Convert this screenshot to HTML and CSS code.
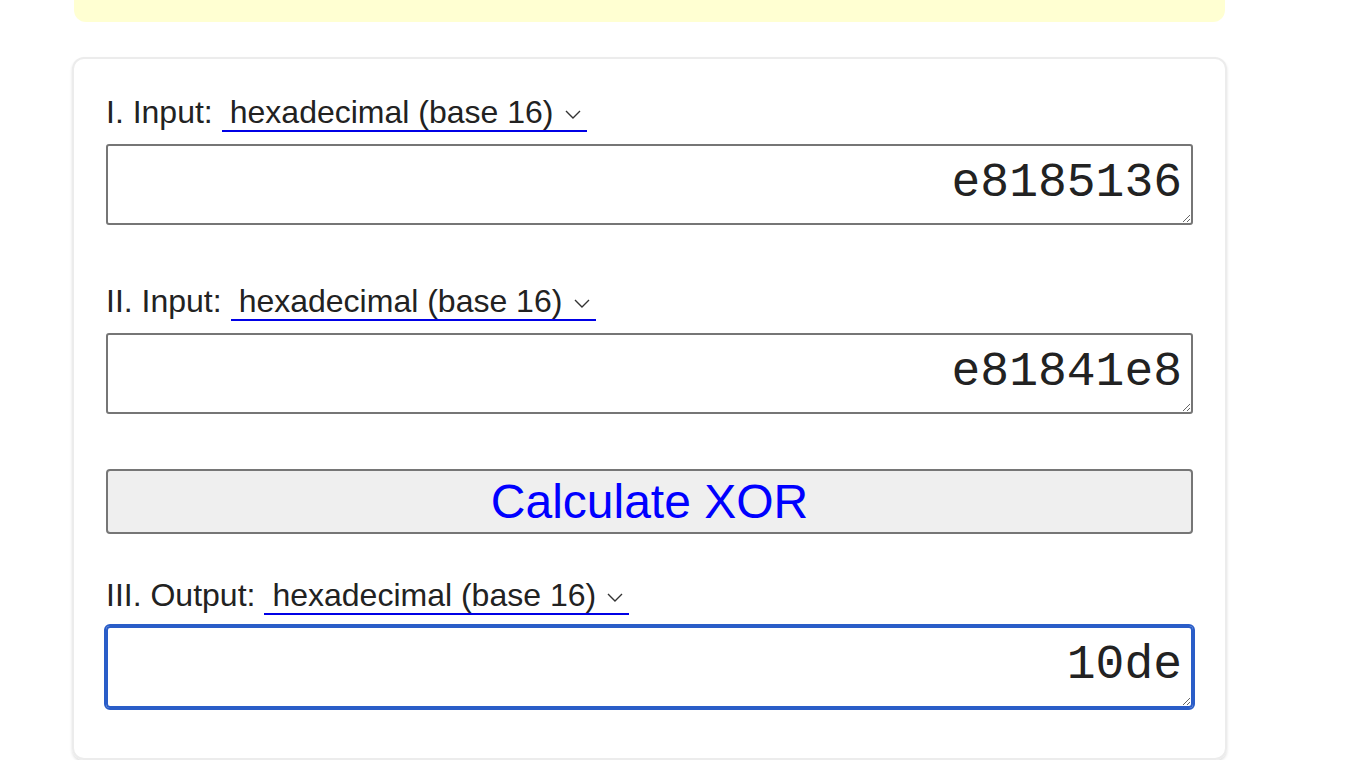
FILE: index.html
```html
<!DOCTYPE html>
<html lang="en">
<head>
    <meta charset="UTF-8">
    <meta name="viewport" content="width=device-width, initial-scale=1.0">
    <title>XOR Calculator</title>
    <link rel="stylesheet" href="styles.css">
</head>
<body>
    <div class="page">
        <div class="notice"></div>

        <div class="calc-card">
            <div class="field-row">
                <label for="base1">I. Input:</label>
                <span class="select-wrap">
                    <select id="base1">
                        <option>binary (base 2)</option>
                        <option>octal (base 8)</option>
                        <option>decimal (base 10)</option>
                        <option selected>hexadecimal (base 16)</option>
                    </select>
                    <svg class="chevron" width="16" height="9" viewBox="0 0 16 9"><polyline points="1,1 8,8 15,1" fill="none" stroke="#333" stroke-width="1.4"/></svg>
                </span>
            </div>
            <textarea id="input1" class="num-box" rows="1">e8185136</textarea>

            <div class="field-row second">
                <label for="base2">II. Input:</label>
                <span class="select-wrap">
                    <select id="base2">
                        <option>binary (base 2)</option>
                        <option>octal (base 8)</option>
                        <option>decimal (base 10)</option>
                        <option selected>hexadecimal (base 16)</option>
                    </select>
                    <svg class="chevron" width="16" height="9" viewBox="0 0 16 9"><polyline points="1,1 8,8 15,1" fill="none" stroke="#333" stroke-width="1.4"/></svg>
                </span>
            </div>
            <textarea id="input2" class="num-box" rows="1">e81841e8</textarea>

            <button class="calc-btn" onclick="calcXor()">Calculate XOR</button>

            <div class="field-row output">
                <label for="base3">III. Output:</label>
                <span class="select-wrap">
                    <select id="base3">
                        <option>binary (base 2)</option>
                        <option>octal (base 8)</option>
                        <option>decimal (base 10)</option>
                        <option selected>hexadecimal (base 16)</option>
                    </select>
                    <svg class="chevron" width="16" height="9" viewBox="0 0 16 9"><polyline points="1,1 8,8 15,1" fill="none" stroke="#333" stroke-width="1.4"/></svg>
                </span>
            </div>
            <textarea id="result" class="num-box active" rows="1" readonly>10de</textarea>
        </div>
    </div>

    <script>
        const bases = [2, 8, 10, 16];

        function calcXor() {
            const b1 = bases[document.getElementById('base1').selectedIndex];
            const b2 = bases[document.getElementById('base2').selectedIndex];
            const b3 = bases[document.getElementById('base3').selectedIndex];
            const a = BigInt(parseInt(document.getElementById('input1').value.trim(), b1) || 0);
            const b = BigInt(parseInt(document.getElementById('input2').value.trim(), b2) || 0);
            document.getElementById('result').value = (a ^ b).toString(b3);
        }
    </script>
</body>
</html>
```

FILE: styles.css
```css
body {
    margin: 0;
    font-family: "Liberation Sans", Arial, sans-serif;
    background-color: white;
    color: #222;
}
.page {
    width: 1155px;
    margin-left: 72px;
}
.notice {
    height: 22px;
    margin: 0 2px;
    background-color: #ffffd2;
    border-radius: 0 0 12px 12px;
}
.calc-card {
    margin-top: 35px;
    padding: 35px 32px 50px;
    border: 2px solid #ececec;
    border-radius: 12px;
    box-shadow: 0 2px 3px rgba(0, 0, 0, 0.12);
}
.field-row {
    display: flex;
    align-items: baseline;
    font-size: 32px;
}
.field-row label {
    margin-right: 9px;
}
.field-row.second {
    margin-top: 58px;
}
.field-row.output {
    margin-top: 43px;
}
.select-wrap {
    position: relative;
}
select {
    appearance: none;
    -webkit-appearance: none;
    font-family: inherit;
    font-size: 32px;
    color: #222;
    background: transparent;
    border: none;
    border-bottom: 2px solid #0000e6;
    border-radius: 0;
    padding: 0 33px 0 8px;
    margin: 0;
}
.chevron {
    position: absolute;
    right: 6px;
    top: 16px;
    pointer-events: none;
}
.num-box {
    display: block;
    box-sizing: border-box;
    width: 100%;
    height: 81px;
    margin-top: 12px;
    padding: 10px 9px 0 2px;
    font-family: "Liberation Mono", "Courier New", monospace;
    font-size: 48px;
    color: #222;
    text-align: right;
    border: 2px solid #767676;
    border-radius: 3px;
    overflow: hidden;
}
.num-box.active {
    height: 82px;
    margin-top: 11px;
    border-color: #2a5dc8;
    outline: 2px solid #2a5dc8;
    border-radius: 4px;
}
.calc-btn {
    display: block;
    width: 100%;
    height: 65px;
    margin-top: 55px;
    font-family: inherit;
    font-size: 48px;
    color: #0000ff;
    background-color: #efefef;
    border: 2px solid #767676;
    border-radius: 4px;
    cursor: pointer;
}
.calc-btn:hover {
    background-color: #e5e5e5;
}
```
